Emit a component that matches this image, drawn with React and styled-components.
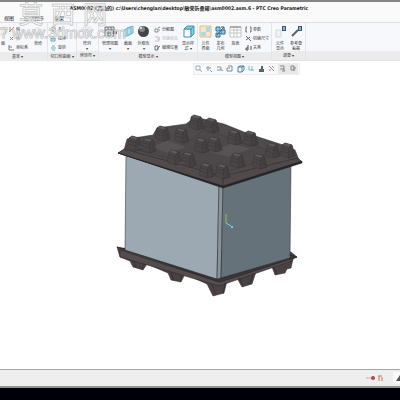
import React from "react";
import styled, { createGlobalStyle } from "styled-components";

const topBlocks = [
  [191, 115], [206, 118], [157, 126], [176, 128], [229, 130], [245, 131],
  [129, 136], [143, 138], [196, 138], [209, 137], [267, 143], [282, 143],
  [169, 150], [183, 152], [232, 153], [254, 154], [201, 163], [217, 164],
];

const Block = ({ x, y }) => (
  <g transform={`translate(${x} ${y})`} stroke="#343132" strokeWidth="0.4">
    <path d="M-2 12 0 2 3 0 10 2 13 13 6 15Z" fill="#4a4647" />
    <path d="M0 2 3 0 10 2 7 4Z" fill="#615b5c" />
    <path d="M7 4 10 2 13 13 6 15Z" fill="#454142" />
    <path d="M0 5 7 7M-1 8 6 10M9 6 11 12" fill="none" />
  </g>
);

const Crate = () => (
  <svg width="188" height="186" viewBox="115 112 188 186" role="img" aria-label="Pallet box assembly">
    <g stroke="#262326" strokeWidth="0.5" strokeLinejoin="round">
      <path d="M117 247 121 248 291 252 297 257 293 259 291 268 287 269 285 273 275 275 272 267 256 272 252 284 242 287 237 278 227 281 224 293 213 296 207 284 185 274 181 282 171 280 168 273 147 264 143 270 133 267 130 261 120 257Z" fill="#4a4142" />
      <path d="M120 250 219 282 293 258 292 261 219 286 120 257Z" fill="#554c4d" />
      <path d="M117 247 122 248 220 279 291 255 297 257 220 282Z" fill="#38373a" />
      <path d="M134 261 136 268M144 264 142 269M171 272 174 281M182 276 180 282M212 285 216 295M225 283 223 294M239 277 243 285M253 273 250 284M274 267 277 275" fill="none" />
      <path d="M126 153 219 184 217 279 125 250Z" fill="#9ca9b2" />
      <path d="M219 184 223 186 221 278 217 279Z" fill="#87949d" />
      <path d="M223 186 291 163 290 258 221 278Z" fill="#66727a" />
      <path d="M118 153 124 150 127 139 153 135 157 128 186 124 195 117 224 124 249 134 283 145 295 150 299 160 302 162 223 187Z" fill="#4f4b4c" />
      <path d="M118 153 124 149 223 176 298 158 302 162 223 187Z" fill="#504a4b" />
      <path d="M118 153 223 186 302 161 302 163 223 188Z" fill="#252426" />
      <path d="M137 150 160 140 181 146 205 129 232 139 253 145 280 154 224 173Z" fill="#4c4849" stroke="#403c3d" />
      <path d="M151 147 167 140 187 147 169 154ZM207 152 232 143 252 149 228 157Z" fill="#575253" stroke="#484445" />
      <path d="M223 176V186" fill="none" />
    </g>
    {topBlocks.map(([x, y]) => (
      <Block key={`${x}-${y}`} x={x} y={y} />
    ))}
    <path d="M179 163h4M139 147h3" stroke="#79564f" />
    <path d="M226 223V214" stroke="#96b65f" />
    <path d="m226 223 5 3" stroke="#6bd4e3" />
    <circle cx="232" cy="227" r="1" fill="#8ee5f1" />
  </svg>
);

const iconShapes = {
  view: (
    <>
      <path d="M1 2h9v9H1zM1 5h9M1 8h9M4 2v9M7 2v9" fill="#e6e8ea" stroke="#707478" />
      <path d="M9 6h4v3H9z" fill="#555b63" />
    </>
  ),
  section: <path d="m2 5 7-3v7l-7 3zM5 3l6-2v7l-6 3z" fill="#b4e0ee" stroke="#74b5cb" />,
  sphere: (
    <>
      <circle cx="6.5" cy="6.5" r="5.5" fill="#454545" />
      <circle cx="5" cy="4" r="3" fill="#858585" />
      <circle cx="4" cy="3" r="1" fill="#eeeeee" />
    </>
  ),
  cube: (
    <>
      <path d="M2 4h7v8H2z" fill="#ffffff" stroke="#3b98b5" />
      <path d="m2 4 3-3h7L9 4zM9 4l3-3v8l-3 3z" fill="#87cadd" stroke="#3b98b5" />
    </>
  ),
  map: (
    <>
      <path d="M1 1h11v11H1z" fill="#f8e5c6" stroke="#dcc08c" />
      <path d="M2 7h5v4H2zM7 2h4v5H7z" fill="#a8dce9" />
    </>
  ),
  publish: (
    <>
      <path d="M2 2h4v4H2zM7 5h4v4H7zM2 8h4v4H2z" fill="#8dcce5" stroke="#2c718f" />
      <path d="m3 10 7-8M10 2H7M10 2v3" fill="none" stroke="#355f78" />
    </>
  ),
  table: (
    <>
      <path d="M1 2h11v10H1zM1 5h11M5 2v10M8 2v10M1 8h11" fill="#ffffff" stroke="#c3c6c8" />
      <path d="M1 2h11" stroke="#777c80" />
    </>
  ),
  info: (
    <>
      <path d="M2 5h5v7H2z" fill="#eff5f5" stroke="#cddada" />
      <path d="M8 1h4v5H8z" fill="#345b80" />
      <path d="M10 2v3" stroke="#ffffff" />
    </>
  ),
  wrench: (
    <>
      <path d="m2 11 6-6" fill="none" stroke="#596169" strokeWidth="2" />
      <path d="M8 1h4v5H8z" fill="#345b80" />
      <path d="M10 2v3" stroke="#ffffff" />
    </>
  ),
  plane: <path d="m1 4 7-2 2 6-7 2z" fill="#f4f0e9" stroke="#e3dbd0" />,
  sketch: <path d="M2 9q0-6 4-6t4 5M2 9h8" fill="none" stroke="#dfe2e4" />,
  pattern: <path d="M2 2h3v3H2zM7 2h3v3H7zM2 7h3v3H2zM7 7h3v3H7z" fill="#f4f5f6" stroke="#dde0e3" />,
};

const Icon = ({ name }) => (
  <svg width="13" height="13" viewBox="0 0 13 13" aria-hidden="true">{iconShapes[name]}</svg>
);

const smallShapes = {
  axis: <path d="M1 6 6 1M2 1v5" stroke="#b18a76" />,
  point: <path d="m2 2 3 3M5 2 2 5" stroke="#a18378" />,
  coord: <path d="M1 1v5h5M1 3h3" stroke="#8b7775" />,
  hole: <path d="M2 1h3v4H2z" stroke="#a2aeb2" />,
  extrude: <path d="M1 3h4v3H1zM3 1v4" stroke="#53a9b1" />,
  revolve: <path d="M1 4h5M2 2h3M2 6h3" stroke="#6cb5bc" />,
  explode: <path d="M1 3h3v3H1zM4 2l2-1M5 4h1" stroke="#7a9488" />,
  toggle: <path d="M1 2h4v4H1M3 4h3" stroke="#c5c5c5" />,
  edit: <path d="M1 2h3v4H1zM3 5l3-3" stroke="#6c7278" />,
  brackets: <path d="M2 1H1v5h1M5 1h1v5H5" stroke="#666666" />,
  dims: <path d="m1 1 5 5M1 5l4-3" stroke="#4d7180" />,
  relation: <path d="M3 1v5H1V4h2M5 3h2M5 5h2" stroke="#555555" />,
  zoom: <path d="M1 1h4v4H1zM4 4l3 3" stroke="#9eb0bb" />,
  plus: <path d="M1 3h5M3 1v5M5 5l2 2" stroke="#8199a6" />,
  minus: <path d="M1 2h4v3H1M4 4l3 2" stroke="#8199a6" />,
  refit: <path d="M2 1h4v5H1V3h3" stroke="#7b8c98" />,
  box: <path d="M1 2h4v5H1zM1 2l2-1h4v4L5 7M5 2l2-1" stroke="#4886ad" />,
  saved: <path d="M2 1v4h5M5 1v5" stroke="#88b5d4" />,
  shade: <path d="M1 4h5v3H1zM3 1h2v3H3z" fill="#59616b" />,
  datum: <path d="m1 1 5 5M4 1l2 2M1 5h2" stroke="#9d8e88" />,
  note: <path d="M1 1h4v3H1M4 3l2 3H3" stroke="#8a8580" />,
  spin: <path d="M5 1H2v4h4M4 3h3M5 1v5" stroke="#8a8580" />,
};

const SmallIcon = ({ name }) => (
  <svg width="8" height="8" viewBox="0 0 8 8" fill="none" aria-hidden="true">{smallShapes[name]}</svg>
);

const Tool = ({ icon, lines, width }) => (
  <ToolButton type="button" $width={width}>
    <Icon name={icon} />
    {lines.map((line) => (
      <span key={line}>{line}</span>
    ))}
  </ToolButton>
);

const Commands = ({ items, width }) => (
  <CommandList $width={width}>
    {items.map(([icon, label, disabled]) => (
      <Command key={label} type="button" disabled={disabled}>
        <SmallIcon name={icon} />
        {label}
      </Command>
    ))}
  </CommandList>
);

const Panel = ({ label, width, start, children }) => (
  <Group $width={width}>
    <Tools>{children}</Tools>
    <GroupLabel type="button" $start={start}>{label} ▾</GroupLabel>
  </Group>
);

const viewTools = ["zoom", "plus", "minus", "refit", "box", "saved", "shade", "datum", "note", "spin"];

const App = () => (
  <>
    <GlobalStyle />
    <Window>
      <TitleBar>
        <Title>ASM0002 (活动的) c:\Users\chenglan\desktop\敏荣折叠箱\asm0002.asm.6 - PTC Creo Parametric</Title>
      </TitleBar>
      <Tabs>
        <Tab type="button">视图</Tab>
        <Tab type="button">应用程序</Tab>
        <Tab type="button">框架</Tab>
      </Tabs>
      <Ribbon>
        <Panel label="基准" width={48} start>
          <Tool icon="plane" lines={["面"]} width={6} />
          <Commands width={25} items={[["axis", "轴"], ["point", "点"], ["coord", "坐标系"]]} />
          <Tool icon="sketch" lines={["草绘"]} width={14} />
        </Panel>
        <Panel label="切口和曲面" width={29}>
          <Commands width={28} items={[["hole", "孔"], ["extrude", "拉伸"], ["revolve", "旋转"]]} />
        </Panel>
        <Panel label="修饰符" width={22}>
          <Tool icon="pattern" lines={["阵列", "▾"]} width={20} />
        </Panel>
        <Panel label="模型显示" width={99}>
          <Tool icon="view" lines={["管理视图", "▾"]} width={22} />
          <Tool icon="section" lines={["截面", "▾"]} width={14} />
          <Tool icon="sphere" lines={["外观库", "▾"]} width={17} />
          <Commands width={28} items={[["explode", "分解图"], ["toggle", "切换状态", true], ["edit", "编辑位置"]]} />
          <Tool icon="cube" lines={["显示样", "式 ▾"]} width={16} />
        </Panel>
        <Panel label="模型视图" width={74}>
          <Tool icon="map" lines={["元件", "界面"]} width={15} />
          <Tool icon="publish" lines={["发布", "几何"]} width={15} />
          <Tool icon="table" lines={["族表"]} width={15} />
          <Commands width={28} items={[["brackets", "参数"], ["dims", "切换尺寸"], ["relation", "关系"]]} />
        </Panel>
        <Panel label="调查" width={34}>
          <Tool icon="info" lines={["元件", "显示"]} width={16} />
          <Tool icon="wrench" lines={["参考查", "看器"]} width={16} />
        </Panel>
        <RibbonSpace />
      </Ribbon>
      <Canvas>
        <ViewBar>
          {viewTools.map((name) => (
            <ViewButton key={name} type="button" aria-label={name}>
              <SmallIcon name={name} />
            </ViewButton>
          ))}
        </ViewBar>
        <Scene>
          <Crate />
        </Scene>
      </Canvas>
      <StatusBar>
        <svg width="18" height="9" viewBox="0 0 18 9" aria-hidden="true">
          <path d="M1 4h6" stroke="#d8a7a3" />
          <circle cx="8" cy="4" r="2" fill="#ad4848" />
          <path d="M13 2h4M14 2v5M17 3v4" fill="none" stroke="#c07a55" />
        </svg>
        <StatusEnd>
          <svg width="4" height="8" viewBox="0 0 4 8" aria-hidden="true">
            <path d="M4 1 0 7h4z" fill="#555555" />
          </svg>
        </StatusEnd>
      </StatusBar>
      <Taskbar />
      <Watermark>
        <SiteName>
          <span>莫</span>
          <span>西</span>
          <span>网</span>
        </SiteName>
        <SiteAddress>
          <span>7</span>
          <span>www.3dmox.com</span>
        </SiteAddress>
      </Watermark>
    </Window>
  </>
);

const GlobalStyle = createGlobalStyle`
  * {
    box-sizing: border-box;
  }
  body {
    margin: 0;
    background: #ffffff;
    font-family: "Liberation Sans", "Noto Sans CJK SC", sans-serif;
  }
  button {
    padding: 0;
    border: 0;
    background: transparent;
    color: inherit;
    font: inherit;
  }
  svg {
    display: block;
    flex: none;
  }
`;

const Window = styled.main`
  position: relative;
  display: flex;
  flex-direction: column;
  min-height: 100vh;
  overflow: hidden;
  color: #34383c;
  font-size: 5px;
  line-height: 5px;
`;

const TitleBar = styled.header`
  display: flex;
  justify-content: center;
  height: 14px;
  padding: 3px 22px 0 0;
  border-top: 2px solid #858585;
  background: #fafafa;
`;

const Title = styled.h1`
  margin: 0;
  color: #222222;
  font-family: "DejaVu Sans Condensed", "Noto Sans", "Noto Sans CJK SC", sans-serif;
  font-size: 5px;
  font-weight: 700;
  line-height: 6px;
  white-space: nowrap;
`;

const Tabs = styled.nav`
  display: flex;
  align-items: center;
  gap: 10px;
  height: 9px;
  padding-left: 4px;
  border-bottom: 1px solid #dce0e4;
  background: #fafafa;
`;

const Tab = styled.button`
  color: #24272b;
  white-space: nowrap;
`;

const Ribbon = styled.section`
  display: flex;
  height: 38px;
  background: #f7f8fb;
  border-bottom: 1px solid #e2e2e2;
  font-size: 4px;
`;

const Group = styled.div`
  display: flex;
  flex: none;
  flex-direction: column;
  width: ${({ $width }) => $width}px;
  border-right: 1px solid #e3e6e9;
`;

const Tools = styled.div`
  display: flex;
  flex: 1;
  padding-top: 2px;
`;

const GroupLabel = styled.button`
  height: 9px;
  padding-left: ${({ $start }) => ($start ? 12 : 0)}px;
  background: #ebebeb;
  line-height: 9px;
  text-align: ${({ $start }) => ($start ? "left" : "center")};
  white-space: nowrap;
`;

const RibbonSpace = styled.div`
  flex: 1;
  align-self: flex-end;
  height: 9px;
  background: #ebebeb;
`;

const ToolButton = styled.button`
  display: flex;
  flex: none;
  flex-direction: column;
  align-items: center;
  width: ${({ $width }) => $width}px;
  white-space: nowrap;

  svg {
    margin-bottom: 3px;
  }
`;

const CommandList = styled.div`
  display: flex;
  flex: none;
  flex-direction: column;
  width: ${({ $width }) => $width}px;
  padding-left: 2px;
`;

const Command = styled.button`
  display: flex;
  align-items: center;
  height: 9px;
  white-space: nowrap;

  &:disabled {
    color: #b9bbbd;
  }
`;

const Canvas = styled.section`
  display: flex;
  flex: 1;
  flex-direction: column;
  align-items: center;
  padding-top: 2px;
  background: #ffffff;
`;

const ViewBar = styled.div`
  display: flex;
  justify-content: space-around;
  width: 107px;
  height: 12px;
  margin-left: 92px;
  border: 1px solid #eceff1;
  background: #f8f9fa;
`;

const ViewButton = styled.button`
  display: grid;
  place-items: center;
  width: 10px;

  &:nth-child(n + 9) {
    background: #e8e8e8;
  }
`;

const Scene = styled.div`
  padding: 37px 0 0 18px;
`;

const StatusBar = styled.footer`
  display: flex;
  align-items: center;
  justify-content: flex-end;
  gap: 10px;
  height: 19px;
  border-top: 1px solid #a5a5a5;
  border-bottom: 2px solid #929292;
  background: #eeeeee;
`;

const StatusEnd = styled.div`
  display: flex;
  align-items: center;
  justify-content: flex-end;
  width: 7px;
  height: 12px;
  background: #fafafa;
`;

const Taskbar = styled.div`
  height: 12px;
  background: #000008;
`;

const Watermark = styled.div`
  position: absolute;
  top: 4px;
  left: 0;
  color: rgba(255, 255, 255, 0.6);
  pointer-events: none;
  white-space: nowrap;
  -webkit-text-stroke: 1px rgba(150, 154, 156, 0.7);
  paint-order: stroke fill;
`;

const SiteName = styled.div`
  display: flex;
  gap: 8px;
  padding-left: 19px;
  font-size: 24px;
  line-height: 22px;
`;

const SiteAddress = styled.div`
  display: flex;
  gap: 4px;
  font-size: 15px;
  line-height: 13px;
`;

export default App;
